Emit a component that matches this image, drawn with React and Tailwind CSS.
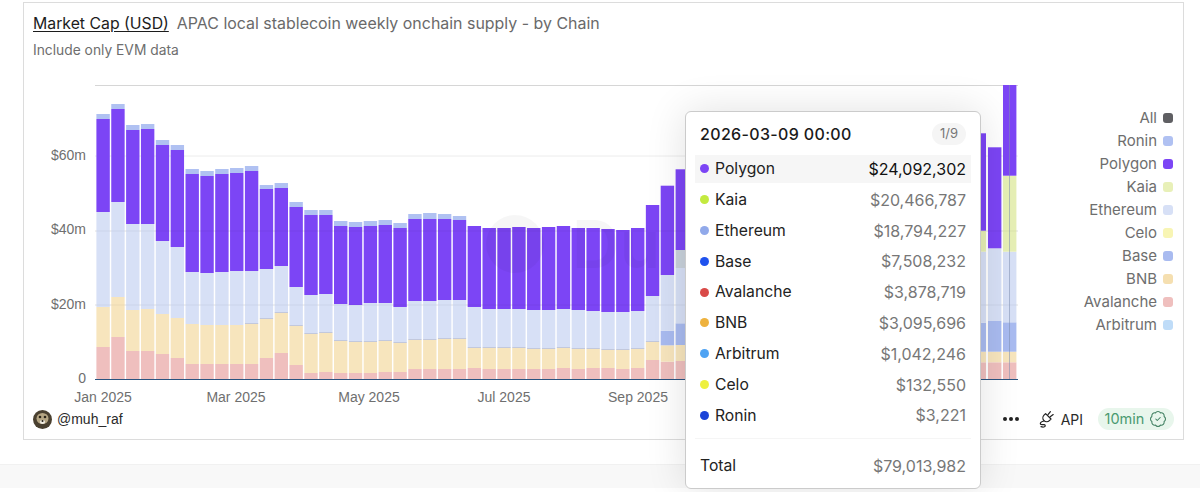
import React from 'react'
import { BadgeCheck } from 'lucide-react'

const COLORS = {
  aval: '#efbfbe',
  bnb: '#f7e5bd',
  base: '#a9bbf0',
  eth: '#d7e0f6',
  kaia: '#e6efb5',
  pol: '#7c45f5',
  ron: '#b0c1f2',
}

// pixel tops per bar: avalanche, bnb, ethereum, polygon, ronin
const BARS = [
  [347, 307, 212, 119, 114], [337, 297, 202, 109, 104], [351, 310, 224, 130, 125], [351, 309, 224, 129, 124],
  [354, 314, 241, 145, 140], [358, 318, 247, 150, 145], [364, 324, 272, 174, 169], [364, 325, 273, 176, 171],
  [364, 325, 272, 174, 169], [364, 325, 271, 173, 168], [364, 324, 271, 171, 166], [358, 319, 269, 189, 185],
  [353, 313, 266, 188, 183], [365, 326, 287, 207, 202], [373, 334, 295, 215, 210], [372, 333, 294, 215, 210],
  [373, 341, 304, 226, 221], [373, 342, 305, 227, 222], [373, 342, 303, 226, 221], [372, 341, 303, 225, 220],
  [372, 343, 307, 228, 223], [369, 340, 301, 219, 214], [369, 340, 301, 219, 213], [369, 339, 300, 219, 214],
  [369, 339, 300, 220, 216], [368, 348, 307, 226, 226], [369, 348, 309, 228, 228], [369, 348, 309, 228, 228],
  [369, 348, 309, 227, 227], [369, 349, 310, 228, 228], [369, 349, 310, 227, 227], [368, 348, 309, 226, 226],
  [369, 349, 310, 228, 228], [368, 349, 311, 228, 228], [368, 350, 312, 229, 229], [369, 350, 312, 230, 230],
  [368, 349, 311, 228, 228], [360, 342, 296, 205, 205],
]

const AXIS_Y = [
  { label: '$60m', y: 156, textY: 159.5 },
  { label: '$40m', y: 231, textY: 233.5 },
  { label: '$20m', y: 305, textY: 309 },
  { label: '0', y: 379, textY: 383 },
]

const AXIS_X = [
  { label: 'Jan 2025', x: 103 },
  { label: 'Mar 2025', x: 236 },
  { label: 'May 2025', x: 369 },
  { label: 'Jul 2025', x: 504 },
  { label: 'Sep 2025', x: 638 },
]

const LEGEND = [
  { name: 'All', color: 'bg-[#5f5f63]' },
  { name: 'Ronin', color: 'bg-[#b0c1f2]' },
  { name: 'Polygon', color: 'bg-[#7c45f5]' },
  { name: 'Kaia', color: 'bg-[#e8f0b8]' },
  { name: 'Ethereum', color: 'bg-[#d7e0f6]' },
  { name: 'Celo', color: 'bg-[#f8f5b4]' },
  { name: 'Base', color: 'bg-[#a9bbf0]' },
  { name: 'BNB', color: 'bg-[#f5dfb0]' },
  { name: 'Avalanche', color: 'bg-[#efbfbe]' },
  { name: 'Arbitrum', color: 'bg-[#bfdcf8]' },
]

const ROWS = [
  { name: 'Polygon', value: '$24,092,302', dot: 'bg-[#7c45f5]', active: true },
  { name: 'Kaia', value: '$20,466,787', dot: 'bg-[#c3ea3f]' },
  { name: 'Ethereum', value: '$18,794,227', dot: 'bg-[#91a9ea]' },
  { name: 'Base', value: '$7,508,232', dot: 'bg-[#1f52ee]' },
  { name: 'Avalanche', value: '$3,878,719', dot: 'bg-[#d94a48]' },
  { name: 'BNB', value: '$3,095,696', dot: 'bg-[#eeb23e]' },
  { name: 'Arbitrum', value: '$1,042,246', dot: 'bg-[#4fa3f3]' },
  { name: 'Celo', value: '$132,550', dot: 'bg-[#eef03f]' },
  { name: 'Ronin', value: '$3,221', dot: 'bg-[#1c44d8]' },
]

const BOTTOM = 379
const SVG_LEFT = 33
const SVG_TOP = 76

const Segment = ({ x, top, bottom, color }) => (
  <rect x={x} y={top} width="13.4" height={Math.max(bottom - top, 0)} fill={color} />
)

const Bar = ({ index, tops }) => {
  const x = 96.4 + index * 14.85
  const [aval, bnb, eth, pol, ron] = tops
  const hasBase = index >= 10
  return (
    <g>
      <Segment x={x} top={aval} bottom={BOTTOM} color={COLORS.aval} />
      <Segment x={x} top={bnb} bottom={aval} color={COLORS.bnb} />
      {hasBase && <Segment x={x} top={bnb - 1} bottom={bnb} color="#c2c8dc" />}
      <Segment x={x} top={eth} bottom={hasBase ? bnb - 1 : bnb} color={COLORS.eth} />
      <Segment x={x} top={pol} bottom={eth} color={COLORS.pol} />
      <Segment x={x} top={ron} bottom={pol} color={COLORS.ron} />
    </g>
  )
}

const Chart = () => (
  <svg width="997" height="340" viewBox={`${SVG_LEFT} ${SVG_TOP} 997 340`} className="block shrink-0">
    <line x1="95" x2="1018" y1="85.5" y2="85.5" stroke="#d6d6d6" />
    {AXIS_Y.slice(0, 3).map((tick) => (
      <line key={tick.label} x1="95" x2="1018" y1={tick.y} y2={tick.y} stroke="#ececec" />
    ))}

    {BARS.map((tops, index) => <Bar key={index} index={index} tops={tops} />)}

    {/* bars after the gap, the tooltip covers the ones in between */}
    <Segment x={660.7} top={361.7} bottom={BOTTOM} color={COLORS.aval} />
    <Segment x={660.7} top={345.3} bottom={361.7} color={COLORS.bnb} />
    <Segment x={660.7} top={330.7} bottom={345.3} color={COLORS.base} />
    <Segment x={660.7} top={275} bottom={330.7} color={COLORS.eth} />
    <Segment x={660.7} top={185.7} bottom={275} color={COLORS.pol} />
    <Segment x={675.6} top={361} bottom={BOTTOM} color={COLORS.aval} />
    <Segment x={675.6} top={345} bottom={361} color={COLORS.bnb} />
    <Segment x={675.6} top={323.3} bottom={345} color={COLORS.base} />
    <Segment x={675.6} top={268} bottom={323.3} color={COLORS.eth} />
    <Segment x={675.6} top={250} bottom={268} color="#c9d2dc" />
    <Segment x={675.6} top={169.3} bottom={250} color={COLORS.pol} />

    <Segment x={972.6} top={362.3} bottom={BOTTOM} color={COLORS.aval} />
    <Segment x={972.6} top={351.7} bottom={362.3} color={COLORS.bnb} />
    <Segment x={972.6} top={322.7} bottom={351.7} color={COLORS.base} />
    <Segment x={972.6} top={251.7} bottom={322.7} color={COLORS.eth} />
    <Segment x={972.6} top={230.7} bottom={251.7} color={COLORS.kaia} />
    <Segment x={972.6} top={133.3} bottom={230.7} color={COLORS.pol} />

    <Segment x={988} top={362.3} bottom={BOTTOM} color={COLORS.aval} />
    <Segment x={988} top={351.7} bottom={362.3} color={COLORS.bnb} />
    <Segment x={988} top={321} bottom={351.7} color={COLORS.base} />
    <Segment x={988} top={248.3} bottom={321} color={COLORS.eth} />
    <Segment x={988} top={147.3} bottom={248.3} color={COLORS.pol} />

    <Segment x={1003} top={362.3} bottom={BOTTOM} color={COLORS.aval} />
    <Segment x={1003} top={351.7} bottom={362.3} color={COLORS.bnb} />
    <Segment x={1003} top={322.3} bottom={351.7} color={COLORS.base} />
    <Segment x={1003} top={251.7} bottom={322.3} color={COLORS.eth} />
    <Segment x={1003} top={175.7} bottom={251.7} color={COLORS.kaia} />
    <Segment x={1003} top={85} bottom={175.7} color={COLORS.pol} />

    {/* grid shows faintly through the bars */}
    {AXIS_Y.slice(1, 3).map((tick) => (
      <line key={tick.label} x1="95" x2="1018" y1={tick.y} y2={tick.y} stroke="#000" strokeOpacity="0.05" />
    ))}

    {/* watermark */}
    <circle cx="515" cy="244" r="29" fill="#000" opacity="0.035" />
    <text x="572" y="268" fontSize="66" fontWeight="600" fontFamily="Inter, sans-serif" fill="#000" opacity="0.03">Du</text>

    <line x1="1009.5" x2="1009.5" y1="85" y2="379" stroke="#7f8fb0" strokeOpacity="0.55" />
    <line x1="95" x2="1018" y1="379.5" y2="379.5" stroke="#2b5480" strokeWidth="1.2" />

    <g fontFamily="'Liberation Sans', Arial, sans-serif" fontSize="14" fill="#6f6f6f">
      {AXIS_Y.map((tick) => (
        <text key={tick.label} x="86" y={tick.textY} textAnchor="end">{tick.label}</text>
      ))}
      {AXIS_X.map((tick) => (
        <text key={tick.label} x={tick.x} y="401.5" textAnchor="middle">{tick.label}</text>
      ))}
    </g>
  </svg>
)

const Legend = () => (
  <div className="flex-1 flex flex-col items-end gap-[3px] pt-[32px] pr-[1px]">
    {LEGEND.map((item) => (
      <div key={item.name} className="h-5 flex items-center gap-[6px] text-[15px] text-[#6e6e6e]">
        <span>{item.name}</span>
        <span className={`w-[10px] h-[10px] rounded-[3px] ${item.color}`} />
      </div>
    ))}
  </div>
)

const Tooltip = () => (
  <div className="absolute left-[661px] top-[108px] w-[296px] h-[378px] bg-white border border-[#cbcbcb] rounded-[6px] shadow-[0_0_40px_rgba(0,0,0,0.12)] px-[9px] z-10">
    <div className="h-[43px] flex items-center justify-between pl-[5px] pr-[5px]">
      <span className="text-[16px] font-medium text-[#1a1a1a] tracking-[0.35px]">2026-03-09 00:00</span>
      <span className="w-[34px] h-[22px] rounded-full bg-[#f5f5f5] flex items-center justify-center text-[13px] text-[#777]">1/9</span>
    </div>
    <div className="flex flex-col">
      {ROWS.map((row) => (
        <div
          key={row.name}
          className={`h-[28px] mb-[2.8px] flex items-center justify-between pl-[5px] pr-[5px] text-[16px] ${row.active ? 'bg-[#f6f6f6] text-[#111]' : 'text-[#777]'}`}
        >
          <span className="flex items-center gap-[6px] text-[15.7px] text-[#222]">
            <span className={`w-[9px] h-[9px] rounded-full ${row.dot}`} />
            {row.name}
          </span>
          <span>{row.value}</span>
        </div>
      ))}
    </div>
    <div className="mt-[6px] border-t border-[#f5f5f5] h-[54px] flex items-center justify-between px-[5px] text-[16px] text-[#777]">
      <span className="text-[15.7px] text-[#222]">Total</span>
      <span>$79,013,982</span>
    </div>
  </div>
)

const Avatar = () => (
  <svg width="19" height="19" viewBox="0 0 19 19" className="shrink-0">
    <circle cx="9.5" cy="9.5" r="9.5" fill="#4a4030" />
    <ellipse cx="9.5" cy="8.5" rx="6" ry="5.5" fill="#b5a583" />
    <circle cx="7" cy="7" r="1.3" fill="#2b2418" />
    <circle cx="12" cy="7" r="1.3" fill="#2b2418" />
    <ellipse cx="9.5" cy="12" rx="2.6" ry="2" fill="#f0ece2" />
    <circle cx="9.5" cy="11" r="1" fill="#221c12" />
  </svg>
)

const PlugIcon = () => (
  <svg width="16" height="18" viewBox="0 0 16 18" fill="none" stroke="#222" strokeWidth="1.2" strokeLinecap="round" strokeLinejoin="round" className="shrink-0">
    <path d="M6.6 3.6l5.4 5.4-1.6 1.6a3.8 3.8 0 0 1-5.4-5.4z" />
    <path d="M9 4.6l2.4-3M11.2 6.8l3-2.2" />
    <path d="M5 11c-2 .4-3.8 1.4-3.6 2.8.2 1.3 2.4.6 3.8.8 1.2.2 1.4 1.6.2 2.2-1 .4-2.4.2-3.4-.2" />
  </svg>
)

export default function App() {
  return (
    <div className="relative h-[492px] overflow-hidden bg-white font-['Inter',sans-serif]">
      <div className="relative ml-[23px] mt-[2px] w-[1161px] h-[438px] border border-[#dcdcdc] bg-white">
        <div className="pl-[9px] pt-[11px]">
          <div className="flex items-center gap-[8px] h-[20px] text-[15.8px]">
            <span className="text-[#1c1c1c] underline underline-offset-2">Market Cap (USD)</span>
            <span className="text-[15.95px] text-[#6a6a6a]">APAC local stablecoin weekly onchain supply - by Chain</span>
          </div>
          <div className="mt-[7px] text-[13.8px] leading-[18px] text-[#6e6e6e]">Include only EVM data</div>
        </div>

        <div className="flex pl-[9px] mt-[17px] pr-[9px]">
          <Chart />
          <Legend />
        </div>

        <div className="absolute inset-x-[9px] bottom-[9px] h-[22px] flex items-center justify-between">
          <div className="flex items-center gap-[5px] font-['Liberation_Sans',Arial,sans-serif] text-[14px] text-[#2a2a2a]">
            <Avatar />
            <span>@muh_raf</span>
          </div>
          <div className="flex items-center">
            <span className="flex gap-[2.5px] mr-[20px]">
              <span className="w-[3.5px] h-[3.5px] rounded-full bg-[#222]" />
              <span className="w-[3.5px] h-[3.5px] rounded-full bg-[#222]" />
              <span className="w-[3.5px] h-[3.5px] rounded-full bg-[#222]" />
            </span>
            <PlugIcon />
            <span className="ml-[6px] mr-[15px] text-[14px] text-[#2a2a2a]">API</span>
            <span className="h-[22px] w-[76px] rounded-full bg-[#e8f6ec] flex items-center justify-center gap-[5px] text-[14.5px] text-[#4a9a70]">
              10min
              <BadgeCheck size={18} strokeWidth={1.4} className="text-[#3f7f60]" />
            </span>
          </div>
        </div>

        <Tooltip />
      </div>

      <div className="mt-[24px] h-[24px] bg-[#f8f8f8] border-t border-[#f1f1f1]" />
    </div>
  )
}
